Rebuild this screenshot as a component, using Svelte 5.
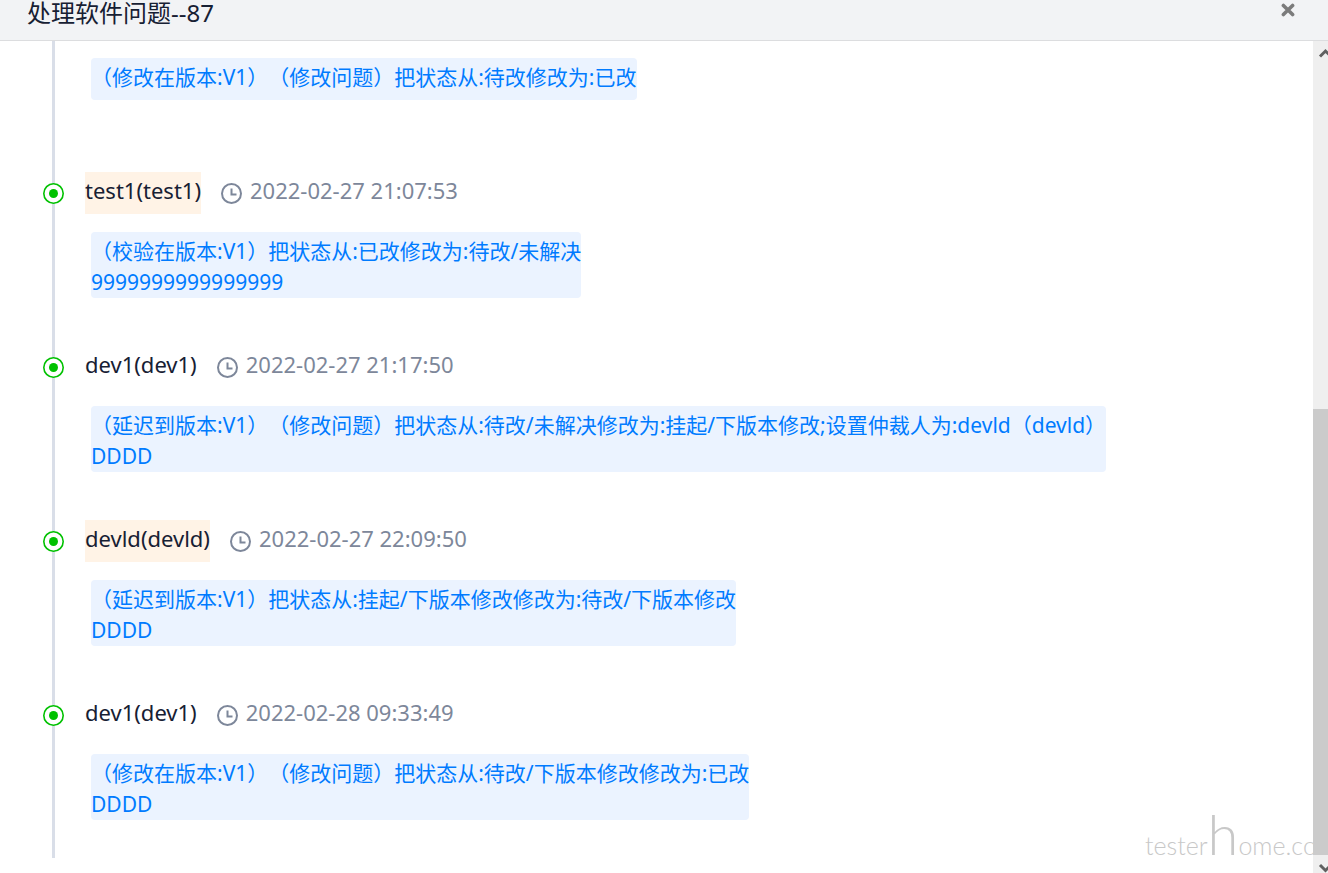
<script lang="ts">
	interface Entry {
		user?: string;
		time?: string;
		highlight?: boolean;
		lines: string[];
	}

	const title = '处理软件问题--87';

	const entries: Entry[] = [
		{
			lines: ['（修改在版本:V1）（修改问题）把状态从:待改修改为:已改']
		},
		{
			user: 'test1(test1)',
			time: '2022-02-27 21:07:53',
			highlight: true,
			lines: ['（校验在版本:V1）把状态从:已改修改为:待改/未解决', '9999999999999999']
		},
		{
			user: 'dev1(dev1)',
			time: '2022-02-27 21:17:50',
			lines: [
				'（延迟到版本:V1）（修改问题）把状态从:待改/未解决修改为:挂起/下版本修改;设置仲裁人为:devld（devld）',
				'DDDD'
			]
		},
		{
			user: 'devld(devld)',
			time: '2022-02-27 22:09:50',
			highlight: true,
			lines: ['（延迟到版本:V1）把状态从:挂起/下版本修改修改为:待改/下版本修改', 'DDDD']
		},
		{
			user: 'dev1(dev1)',
			time: '2022-02-28 09:33:49',
			lines: ['（修改在版本:V1）（修改问题）把状态从:待改/下版本修改修改为:已改', 'DDDD']
		}
	];
</script>

<div class="dialog">
	<header class="dialog-header">
		<h1>{title}</h1>
		<button class="close-btn" type="button" aria-label="关闭">
			<svg width="14" height="14" viewBox="0 0 14 14">
				<path d="M2.4 2.4 L11.6 11.6 M11.6 2.4 L2.4 11.6" />
			</svg>
		</button>
	</header>

	<div class="dialog-body">
		<main class="content">
			<ol class="timeline">
				{#each entries as entry}
					<li class="entry" class:continued={!entry.user}>
						{#if entry.user}
							<svg class="dot" width="21" height="21" viewBox="0 0 21 21">
								<circle cx="10.5" cy="10.5" r="9.7" fill="#fff" stroke="#00c100" stroke-width="1.6" />
								<circle cx="10.5" cy="10.5" r="4.5" fill="#00c100" />
							</svg>
							<div class="meta">
								<span class="user" class:highlight={entry.highlight}>{entry.user}</span>
								<svg class="clock" width="21" height="21" viewBox="0 0 21 21">
									<circle cx="10.5" cy="10.5" r="9.5" />
									<path d="M10.5 5.5 V11.5 H15.5" />
								</svg>
								<time>{entry.time}</time>
							</div>
						{/if}
						<div class="note">
							{#each entry.lines as line}
								<p>{line}</p>
							{/each}
						</div>
					</li>
				{/each}
			</ol>
			<div class="watermark">tester<span>h</span>ome.com</div>
		</main>

		<div class="scrollbar">
			<svg class="arrow" width="24" height="24" viewBox="0 0 24 24">
				<path d="M7 15.5 L12.5 10 L18 15.5" />
			</svg>
			<div class="track">
				<div class="thumb"></div>
			</div>
			<svg class="arrow" width="24" height="18" viewBox="0 0 24 18">
				<path d="M7 10 L12.5 15.5 L18 10" />
			</svg>
		</div>
	</div>
</div>

<style>
	:global(body) {
		background: #fff;
	}

	.dialog {
		display: flex;
		flex-direction: column;
		min-height: 100vh;
		overflow: hidden;
		font-family: 'Noto Sans', 'Noto Sans CJK SC', sans-serif;
		text-spacing-trim: space-all;
		color: #172033;
	}

	.dialog-header {
		display: flex;
		justify-content: space-between;
		align-items: flex-start;
		padding: 0 32px 14px 27px;
		background: #f2f3f5;
		border-bottom: 1px solid #dcdddf;
	}

	h1 {
		margin: 0;
		font-size: 24px;
		line-height: 26px;
		font-weight: 400;
	}

	.close-btn {
		display: flex;
		padding: 3px 1px;
		border: 0;
		background: none;
		cursor: pointer;
	}

	.close-btn path {
		fill: none;
		stroke: #7b7b7b;
		stroke-width: 3.6;
		stroke-linecap: round;
	}

	.dialog-body {
		flex: 1;
		display: grid;
		grid-template-columns: 1fr 15px;
	}

	.content {
		position: relative;
		min-width: 0;
		overflow: hidden;
		padding: 0 32px 15px 52px;
	}

	.timeline {
		margin: 0;
		padding: 0;
		list-style: none;
		border-left: 3px solid #d9dee8;
	}

	.entry {
		position: relative;
		padding: 0 0 48px 30px;
	}

	.entry.continued {
		padding-top: 17px;
		padding-bottom: 72px;
	}

	.entry:last-child {
		padding-bottom: 38px;
	}

	.dot {
		position: absolute;
		left: -12px;
		top: 11px;
	}

	.meta {
		display: flex;
		align-items: center;
		margin-bottom: 18px;
		font-size: 22px;
		line-height: 36px;
	}

	.user {
		padding-bottom: 6px;
	}

	.user.highlight {
		background: #fff3e6;
	}

	.clock {
		margin: 0 8px 0 20px;
		fill: none;
		stroke: #7d879a;
		stroke-width: 2;
	}

	time {
		padding-bottom: 6px;
		color: #7d879a;
	}

	.note {
		width: fit-content;
		box-sizing: border-box;
		min-height: 42px;
		margin-left: 6px;
		padding-top: 4px;
		border-radius: 4px;
		background: #ebf3ff;
		color: #007bff;
		font-size: 21px;
		line-height: 31px;
	}

	.note p {
		margin: 0;
	}

	.watermark {
		position: absolute;
		right: -24px;
		bottom: 8px;
		font-family: Lato, sans-serif;
		font-size: 25px;
		font-weight: 300;
		line-height: 40px;
		color: #c8c8c8;
	}

	.watermark span {
		font-size: 56px;
	}

	.scrollbar {
		display: flex;
		flex-direction: column;
		overflow: hidden;
		background: #efefef;
	}

	.arrow {
		flex: none;
		fill: none;
		stroke: #606060;
		stroke-width: 3;
	}

	.track {
		flex: 1;
		display: flex;
		flex-direction: column;
		justify-content: flex-end;
	}

	.thumb {
		height: 56.4%;
		background: #cbcbcb;
	}
</style>
